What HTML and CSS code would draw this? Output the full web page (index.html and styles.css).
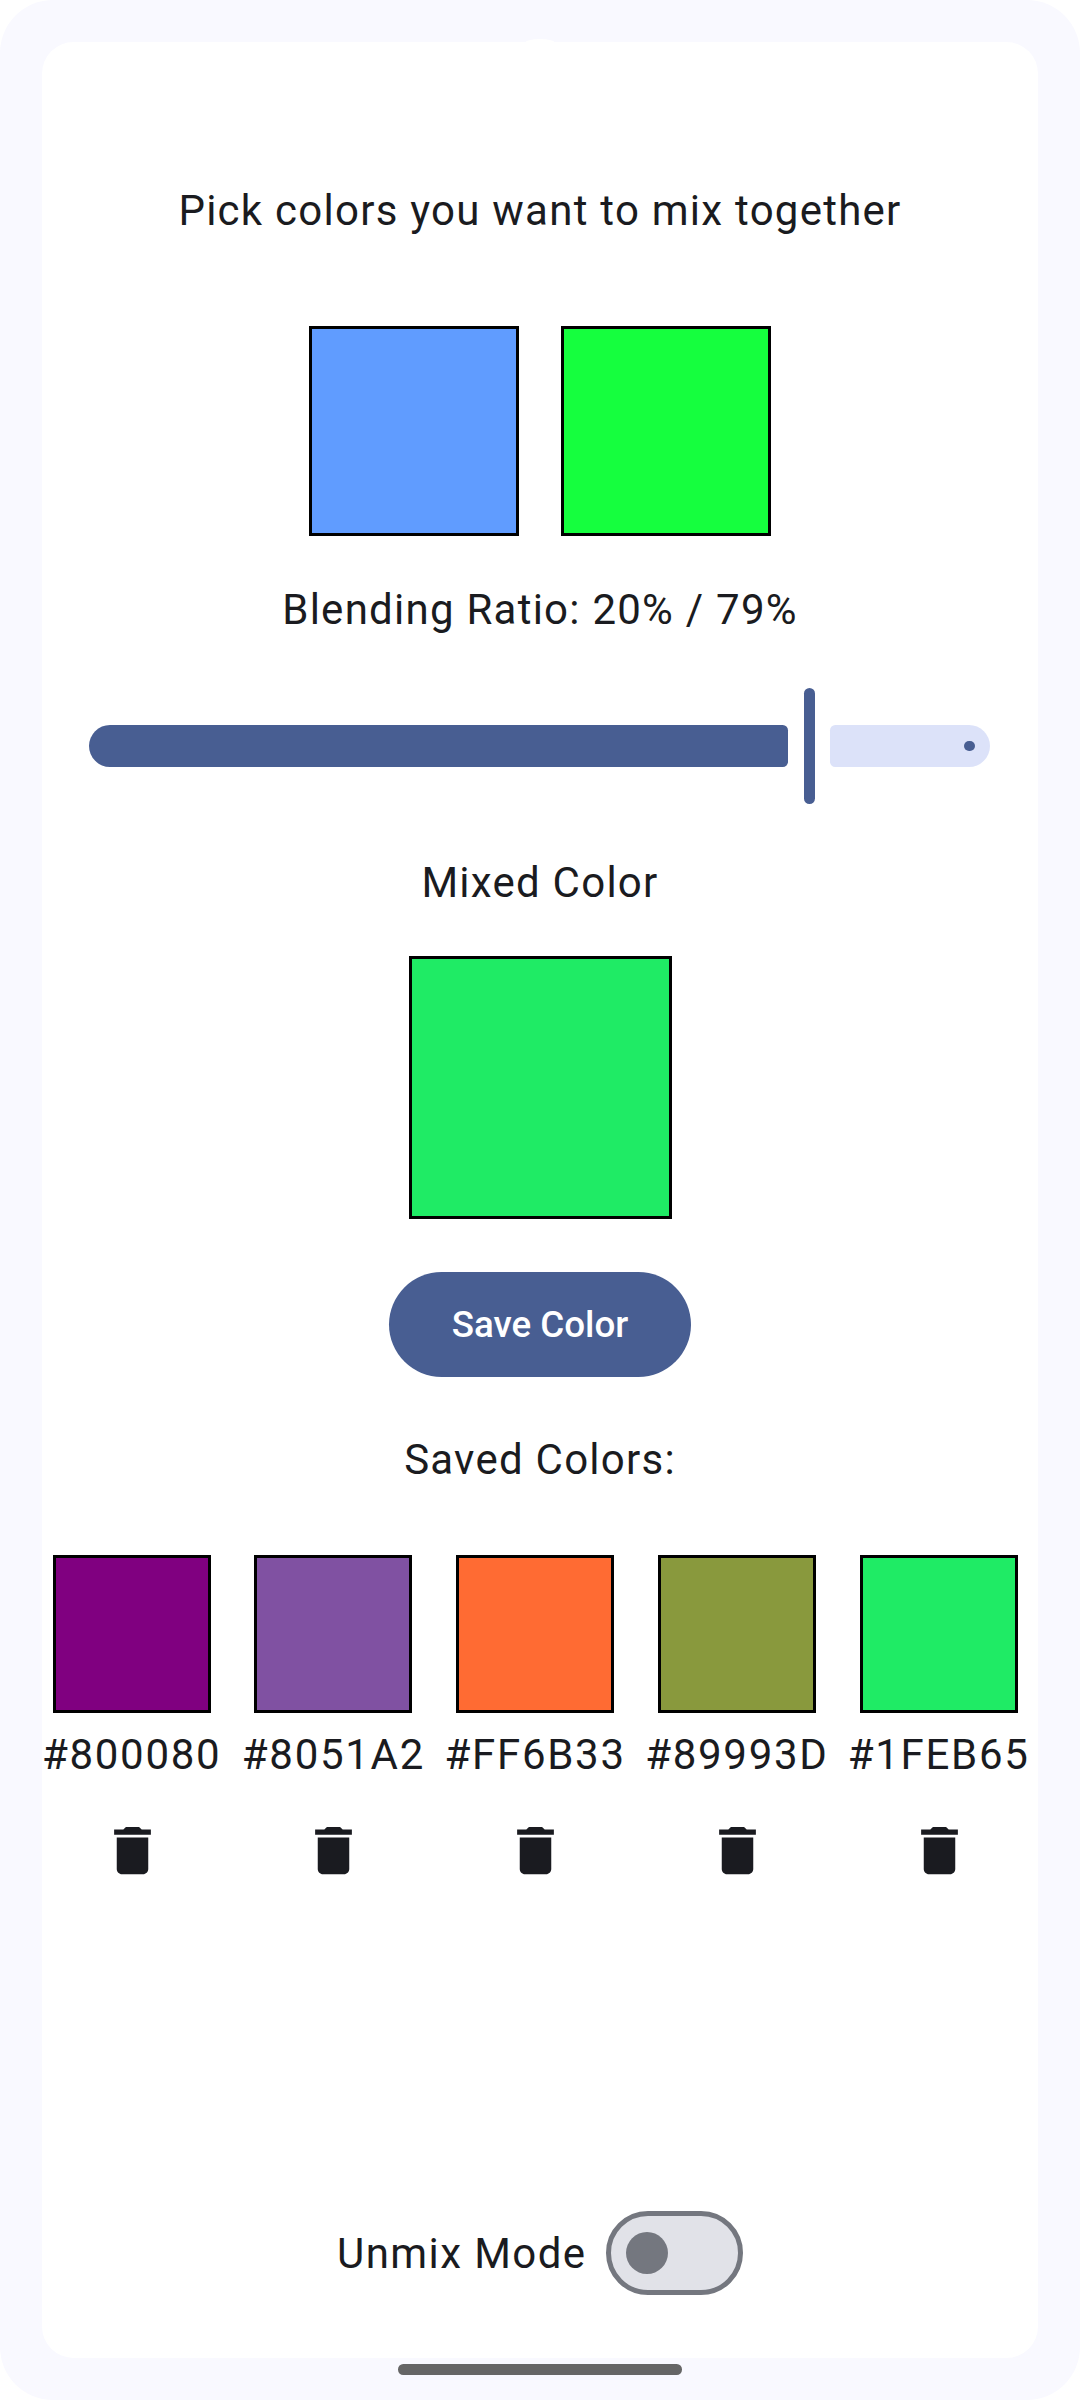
FILE: index.html
```html
<!DOCTYPE html>
<html lang="en">
  <head>
    <meta charset="UTF-8" />
    <meta name="viewport" content="width=device-width, initial-scale=1.0" />
    <title>Color Mixer</title>
    <link rel="stylesheet" href="styles.css">
  </head>
  <body>
    <div class="frame">
      <div class="camera-bump"></div>
      <div class="container">
        <p class="label title">Pick colors you want to mix together</p>

        <div class="picker-row">
          <div class="swatch picker-swatch color-blue"></div>
          <div class="swatch picker-swatch color-green"></div>
        </div>

        <p class="label ratio">Blending Ratio: 20% / 79%</p>

        <div class="slider">
          <div class="slider-active"></div>
          <div class="slider-handle"></div>
          <div class="slider-inactive"><span class="slider-dot"></span></div>
        </div>

        <p class="label mixed-label">Mixed Color</p>
        <div class="swatch mixed-swatch color-1feb65"></div>

        <button class="save-btn">Save Color</button>

        <p class="label saved-label">Saved Colors:</p>

        <div class="saved-list">
          <div class="saved-item">
            <div class="swatch saved-swatch color-800080"></div>
            <p class="label hex">#800080</p>
            <svg class="trash" viewBox="0 0 24 24"><path d="M6 19c0 1.1.9 2 2 2h8c1.1 0 2-.9 2-2V7H6v12zM19 4h-3.5l-1-1h-5l-1 1H5v2h14V4z" /></svg>
          </div>
          <div class="saved-item">
            <div class="swatch saved-swatch color-8051a2"></div>
            <p class="label hex">#8051A2</p>
            <svg class="trash" viewBox="0 0 24 24"><path d="M6 19c0 1.1.9 2 2 2h8c1.1 0 2-.9 2-2V7H6v12zM19 4h-3.5l-1-1h-5l-1 1H5v2h14V4z" /></svg>
          </div>
          <div class="saved-item">
            <div class="swatch saved-swatch color-ff6b33"></div>
            <p class="label hex">#FF6B33</p>
            <svg class="trash" viewBox="0 0 24 24"><path d="M6 19c0 1.1.9 2 2 2h8c1.1 0 2-.9 2-2V7H6v12zM19 4h-3.5l-1-1h-5l-1 1H5v2h14V4z" /></svg>
          </div>
          <div class="saved-item">
            <div class="swatch saved-swatch color-89993d"></div>
            <p class="label hex">#89993D</p>
            <svg class="trash" viewBox="0 0 24 24"><path d="M6 19c0 1.1.9 2 2 2h8c1.1 0 2-.9 2-2V7H6v12zM19 4h-3.5l-1-1h-5l-1 1H5v2h14V4z" /></svg>
          </div>
          <div class="saved-item">
            <div class="swatch saved-swatch color-1feb65"></div>
            <p class="label hex">#1FEB65</p>
            <svg class="trash" viewBox="0 0 24 24"><path d="M6 19c0 1.1.9 2 2 2h8c1.1 0 2-.9 2-2V7H6v12zM19 4h-3.5l-1-1h-5l-1 1H5v2h14V4z" /></svg>
          </div>
        </div>

        <div class="unmix-row">
          <p class="label unmix-label">Unmix Mode</p>
          <div class="switch"><span class="switch-thumb"></span></div>
        </div>
      </div>
      <div class="home-bar"></div>
    </div>
  </body>
</html>
```

FILE: styles.css
```css
* {
  margin: 0;
  padding: 0;
  box-sizing: border-box;
}

body {
  width: 1080px;
  height: 2400px;
  background: #ffffff;
  font-family: "Roboto", sans-serif;
  overflow: hidden;
}

.frame {
  position: relative;
  height: 2400px;
  padding: 42px;
  background: #f9f9ff;
  border-radius: 53px;
}

.camera-bump {
  position: absolute;
  top: 39px;
  left: 525px;
  width: 30px;
  height: 8px;
  background: #ffffff;
  border-radius: 50%;
}

.container {
  position: relative;
  height: 2316px;
  background: #ffffff;
  border-radius: 31.5px;
  display: flex;
  flex-direction: column;
  align-items: center;
}

.label {
  font-size: 42px;
  font-weight: 380;
  line-height: 63px;
  letter-spacing: 1.25px;
  color: #1a1b20;
  text-align: center;
  white-space: nowrap;
}

.title {
  margin-top: 136.5px;
}

.swatch {
  border: 3px solid #000000;
}

.picker-row {
  display: flex;
  gap: 42px;
  margin-top: 84px;
}

.picker-swatch {
  width: 210px;
  height: 210px;
}

.color-blue {
  background: #609cff;
}

.color-green {
  background: #15ff3e;
}

.color-800080 {
  background: #800080;
}

.color-8051a2 {
  background: #8051a2;
}

.color-ff6b33 {
  background: #ff6b33;
}

.color-89993d {
  background: #89993d;
}

.color-1feb65 {
  background: #1feb65;
}

.ratio {
  margin-top: 42px;
}

.slider {
  display: flex;
  align-items: center;
  gap: 15.5px;
  margin-top: 47.5px;
  margin-right: 1px;
  height: 115.5px;
}

.slider-active {
  width: 699.5px;
  height: 42px;
  background: #485e92;
  border-radius: 21px 5.25px 5.25px 21px;
}

.slider-handle {
  width: 11px;
  height: 115.5px;
  background: #485e92;
  border-radius: 5.5px;
}

.slider-inactive {
  width: 160px;
  height: 42px;
  background: #dce2f9;
  border-radius: 5.25px 21px 21px 5.25px;
  display: flex;
  align-items: center;
  justify-content: flex-end;
  padding-right: 15.75px;
}

.slider-dot {
  width: 10.5px;
  height: 10.5px;
  background: #485e92;
  border-radius: 50%;
}

.mixed-label {
  margin-top: 47px;
}

.mixed-swatch {
  width: 263px;
  height: 263px;
  margin-top: 42px;
}

.save-btn {
  height: 105px;
  padding: 0 63px;
  margin-top: 53.5px;
  background: #485e92;
  color: #ffffff;
  border: none;
  border-radius: 52.5px;
  font-family: "Roboto", sans-serif;
  font-size: 36.75px;
  font-weight: 500;
  letter-spacing: 0;
}

.saved-label {
  margin-top: 50.5px;
}

.saved-list {
  align-self: flex-start;
  display: flex;
  margin-top: 64.5px;
  margin-left: -11.25px;
}

.saved-item {
  width: 201.75px;
  display: flex;
  flex-direction: column;
  align-items: center;
}

.saved-swatch {
  width: 158px;
  height: 158px;
}

.hex {
  margin-top: 9.5px;
  letter-spacing: 1.7px;
}

.trash {
  width: 63px;
  height: 63px;
  margin-top: 33px;
  margin-left: 1px;
  fill: #1a1b20;
}

.unmix-row {
  display: flex;
  align-items: center;
  gap: 20px;
  margin-top: auto;
  margin-bottom: 63px;
}

.unmix-label {
  letter-spacing: 1.4px;
}

.switch {
  width: 136.5px;
  height: 84px;
  background: #e1e2e8;
  border: 5.25px solid #74777f;
  border-radius: 42px;
  display: flex;
  align-items: center;
  padding-left: 15px;
}

.switch-thumb {
  width: 42px;
  height: 42px;
  background: #74777f;
  border-radius: 50%;
}

.home-bar {
  position: absolute;
  left: 398px;
  top: 2364px;
  width: 284px;
  height: 10.5px;
  background: #666666;
  border-radius: 5.25px;
}
```
